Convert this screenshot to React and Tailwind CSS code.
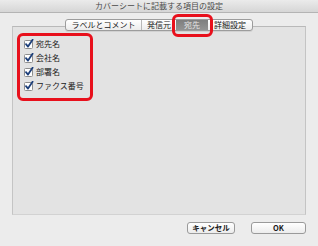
import React from "react";

const font = { fontFamily: '"Noto Sans CJK JP", "Noto Sans", sans-serif' };

function Check() {
  return (
    <svg width="10" height="10" viewBox="0 0 10 10" className="shrink-0">
      <rect x="0.5" y="1.5" width="8" height="8" rx="1" fill="#fff" stroke="#8e8e8e" />
      <path d="M2 5.2 L4 7.6 L8.6 0.8" fill="none" stroke="#1d3f7a" strokeWidth="1.8" strokeLinecap="round" strokeLinejoin="round" />
    </svg>
  );
}

export default function App() {
  const items = ["宛先名", "会社名", "部署名", "ファクス番号"];
  return (
    <div className="relative w-[318px] h-[246px] bg-[#ececec] overflow-hidden text-[8px] leading-none" style={font}>
      {/* Title bar */}
      <div className="h-[13px] flex items-center justify-center bg-gradient-to-b from-[#ebebeb] to-[#d6d6d6] border-b border-[#b4b4b4] text-[#4a4a4a] text-[8px]">
        カバーシートに記載する項目の設定
      </div>

      {/* Tabs */}
      <div className="relative z-10 mt-[6px] flex justify-center">
        <div className="flex h-[12px] rounded-[3px] border border-[#9c9c9c] bg-gradient-to-b from-[#ffffff] to-[#ececec] overflow-hidden text-[#1a1a1a] shadow-[0_1px_0_rgba(0,0,0,0.08)]">
          <div className="w-[76px] flex items-center justify-center border-r border-[#b8b8b8]">ラベルとコメント</div>
          <div className="w-[34px] flex items-center justify-center">発信元</div>
          <div className="w-[32px] flex items-center justify-center bg-gradient-to-b from-[#7e7e7e] to-[#939393] text-[#e4e4e4]">宛先</div>
          <div className="w-[44px] flex items-center justify-center">詳細設定</div>
        </div>
      </div>

      {/* Panel */}
      <div className="mx-[12px] -mt-[5px] h-[189px] bg-[#e3e3e3] border border-[#c4c4c4] border-t-[#b9b9b9] border-b-[#d2d2d2] pt-[10px] pl-[11px]">
        <div className="flex flex-col">
          {items.map((t) => (
            <div key={t} className="h-[14px] flex items-center gap-[2px] text-[#1a1a1a]">
              <Check />
              <span>{t}</span>
            </div>
          ))}
        </div>
      </div>

      {/* Buttons */}
      <div className="mt-[7px] flex justify-end gap-[16px] pr-[12px]">
        <div className="w-[48px] h-[12px] flex items-center justify-center rounded-[3px] border border-[#9a9a9a] bg-gradient-to-b from-[#ffffff] to-[#ececec] text-[#1a1a1a] font-bold text-[7.5px]">キャンセル</div>
        <div className="w-[55px] h-[12px] flex items-center justify-center rounded-[3px] border border-[#9a9a9a] bg-gradient-to-b from-[#ffffff] to-[#ececec] text-[#1a1a1a] font-bold text-[7.5px]">OK</div>
      </div>

      {/* Red annotation outlines */}
      <div className="absolute z-20 left-[172px] top-[14px] w-[41px] h-[23px] border-[3px] border-[#e8101c] rounded-[6px]" />
      <div className="absolute z-20 left-[17px] top-[33px] w-[76px] h-[68px] border-[3px] border-[#e8101c] rounded-[6px]" />
    </div>
  );
}
